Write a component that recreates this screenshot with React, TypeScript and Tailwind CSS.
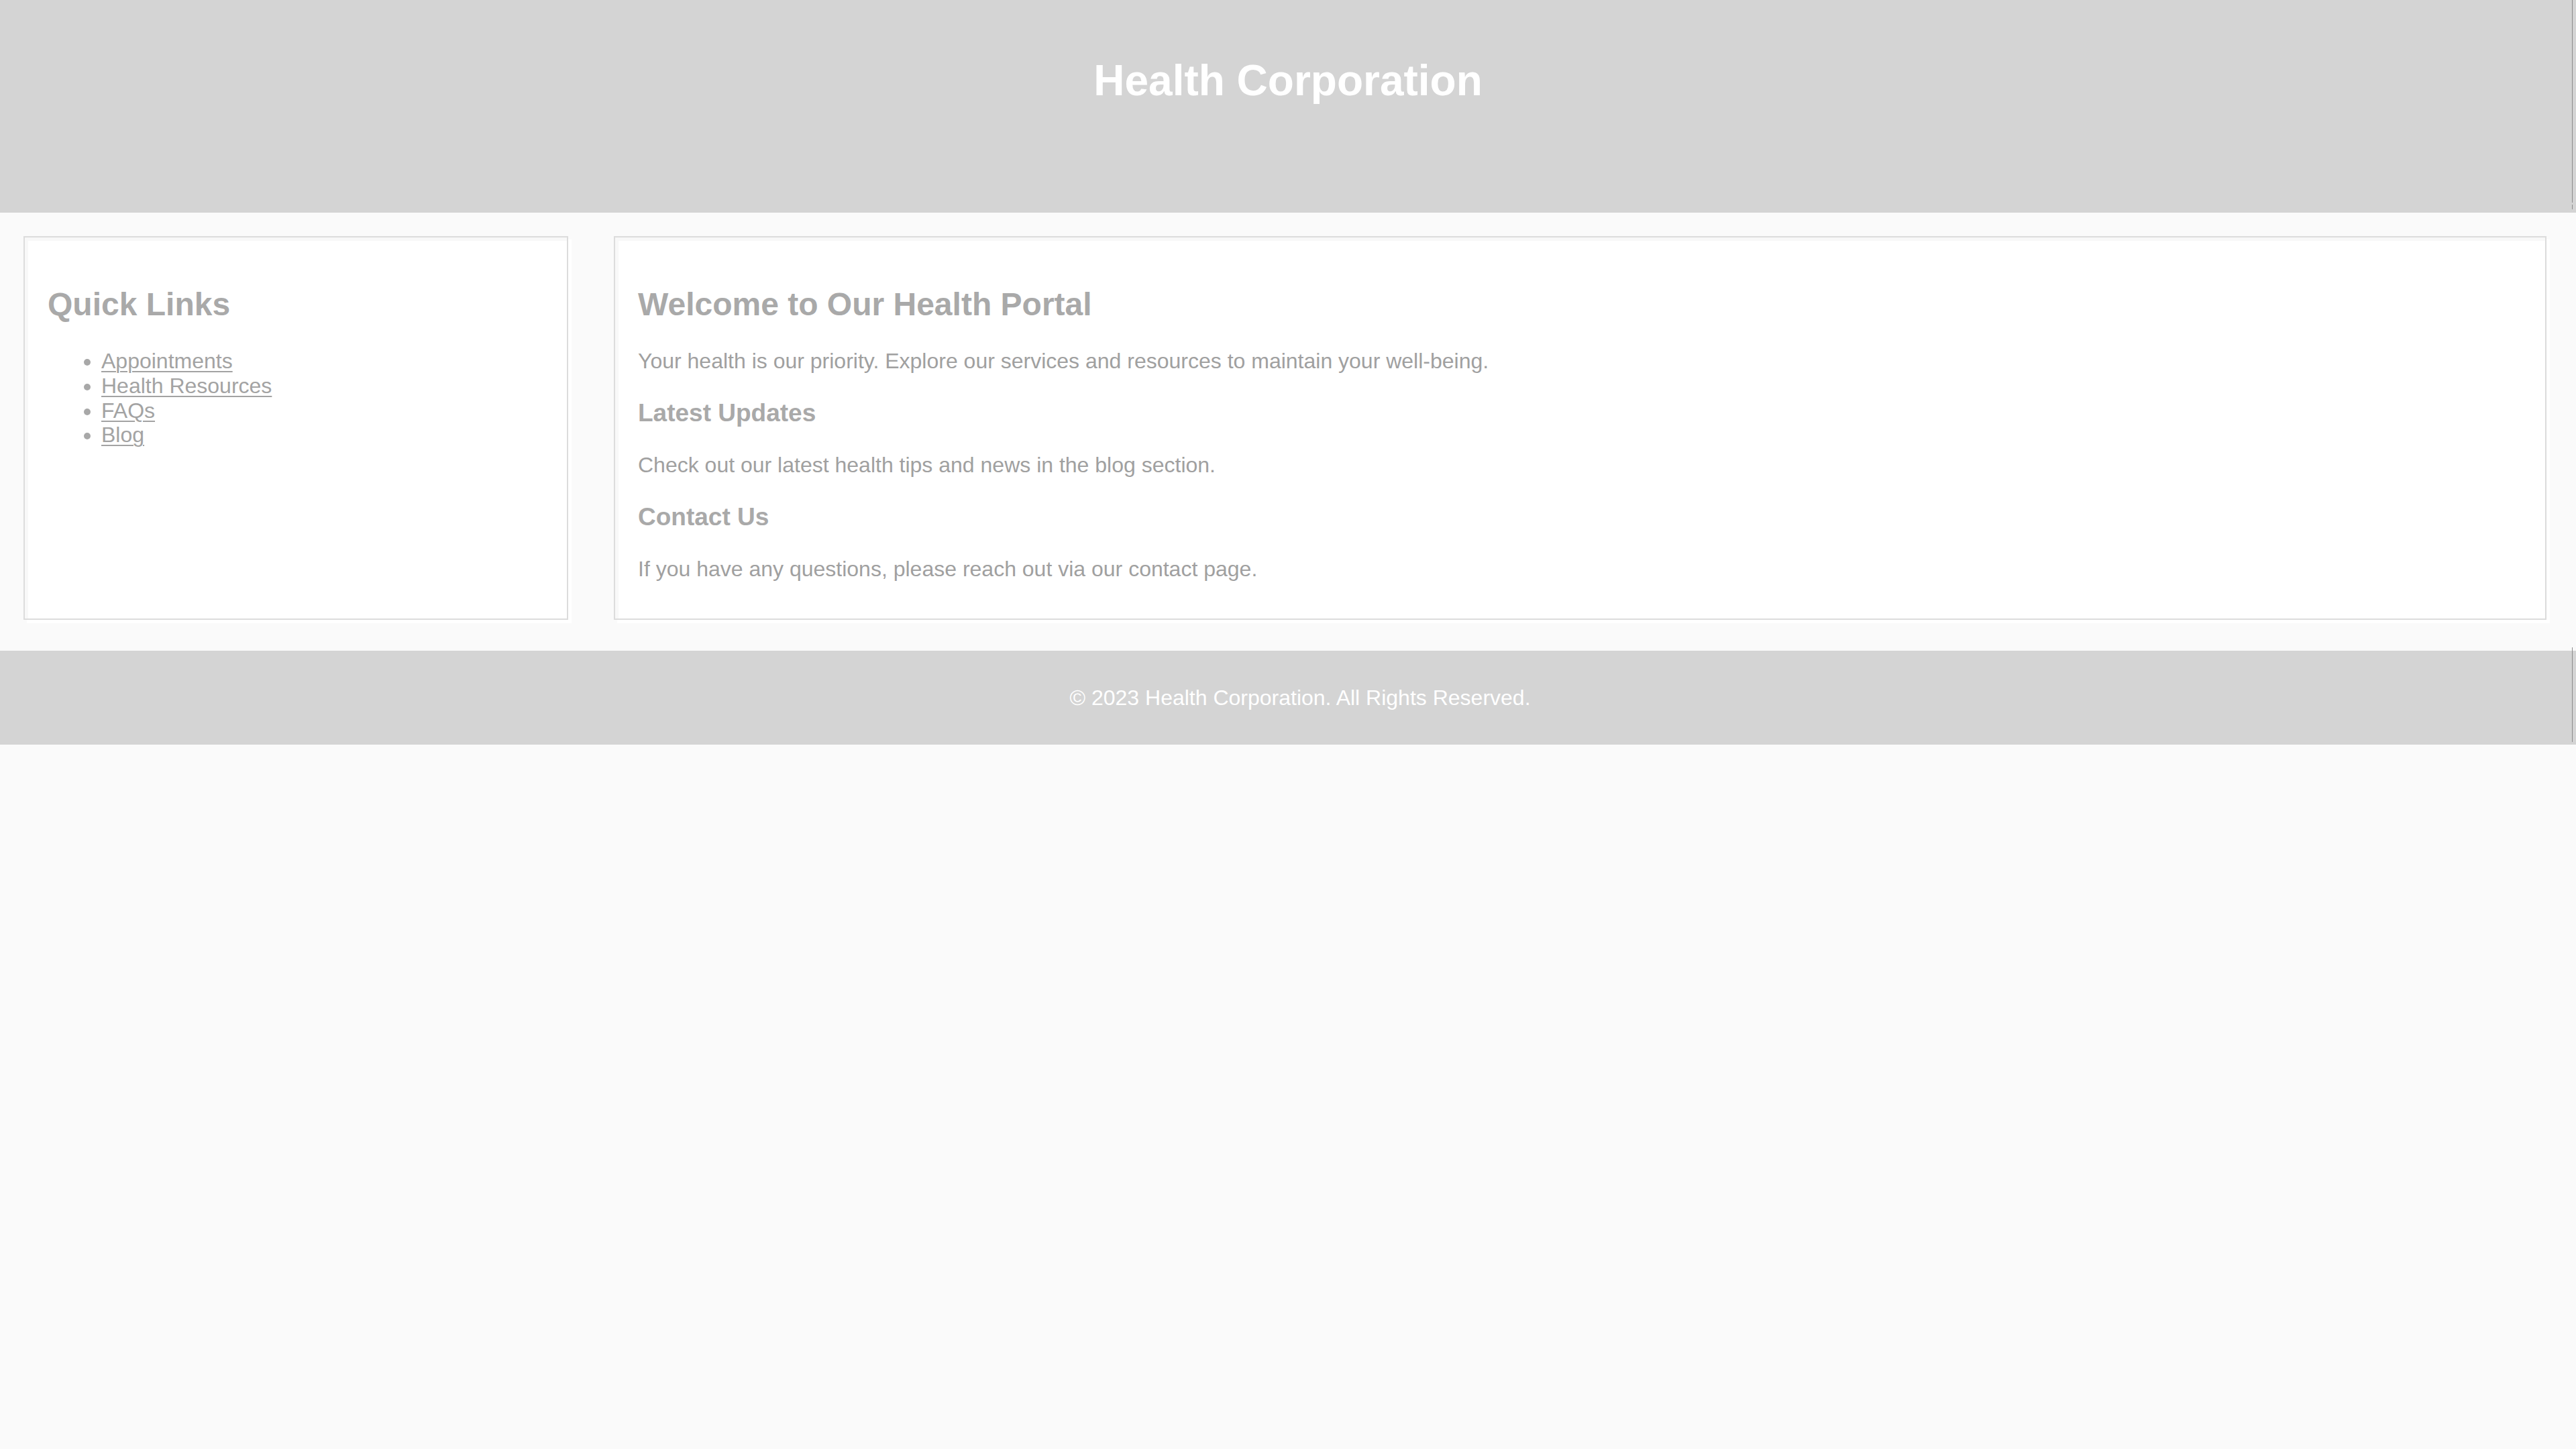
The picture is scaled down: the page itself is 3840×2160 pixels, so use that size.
import React from "react";

const cardCls =
  "box-border h-[572px] border-2 border-[#dcdcdc] bg-white shadow-[5px_5px_0_#ffffff,inset_5px_5px_0_#f8f8f8] pl-[34px] pr-[32px] pt-[72px]";

export default function App() {
  return (
    <div className="min-h-screen bg-[#fafafa] font-['Liberation_Sans',Arial,sans-serif]">
      <header className="relative h-[317px] bg-[#d4d4d4] pt-[88px] text-center">
        <h1 className="text-[64px] leading-[64px] font-bold text-white">Health Corporation</h1>
        <span className="absolute left-[3834px] top-0 h-[302px] w-px bg-[#8c8c8c]" />
        <span className="absolute left-[3834px] top-[305px] h-[7px] w-px bg-[#8c8c8c]" />
      </header>

      <main className="flex gap-[68px] pl-[35px] pr-[44px] pt-[35px] pb-[46px]">
        <aside className={`${cardCls} w-[812px] shrink-0`}>
          <h2 className="text-[48px] leading-[56px] font-bold text-[#a9a9a9]">Quick Links</h2>
          <ul className="mt-[38px] list-disc pl-[80px] text-[32px] leading-[36.8px] text-[#a3a3a3] marker:text-[#a8a8a8]">
            <li>
              <a href="#" className="underline decoration-[2px] underline-offset-[4px]">Appointments</a>
            </li>
            <li>
              <a href="#" className="underline decoration-[2px] underline-offset-[4px]">Health Resources</a>
            </li>
            <li>
              <a href="#" className="underline decoration-[2px] underline-offset-[4px]">FAQs</a>
            </li>
            <li>
              <a href="#" className="underline decoration-[2px] underline-offset-[4px]">Blog</a>
            </li>
          </ul>
        </aside>

        <section className={`${cardCls} flex-1`}>
          <h2 className="text-[48px] leading-[56px] font-bold text-[#a9a9a9]">Welcome to Our Health Portal</h2>
          <p className="mt-[38px] text-[32px] leading-[36px] text-[#a0a0a0]">
            Your health is our priority. Explore our services and resources to maintain your well-being.
          </p>
          <h3 className="mt-[38px] text-[37px] leading-[43px] font-bold text-[#a9a9a9]">Latest Updates</h3>
          <p className="mt-[38px] text-[32px] leading-[36px] text-[#a0a0a0]">
            Check out our latest health tips and news in the blog section.
          </p>
          <h3 className="mt-[38px] text-[37px] leading-[43px] font-bold text-[#a9a9a9]">Contact Us</h3>
          <p className="mt-[38px] text-[32px] leading-[36px] text-[#a0a0a0]">
            If you have any questions, please reach out via our contact page.
          </p>
        </section>
      </main>

      <footer className="relative flex h-[140px] items-center justify-center bg-[#d4d4d4] pl-[36px]">
        <p className="text-[32px] leading-[36.8px] text-white">© 2023 Health Corporation. All Rights Reserved.</p>
        <span className="absolute left-[3834px] top-[-5px] h-[141px] w-px bg-[#8c8c8c]" />
      </footer>
    </div>
  );
}
